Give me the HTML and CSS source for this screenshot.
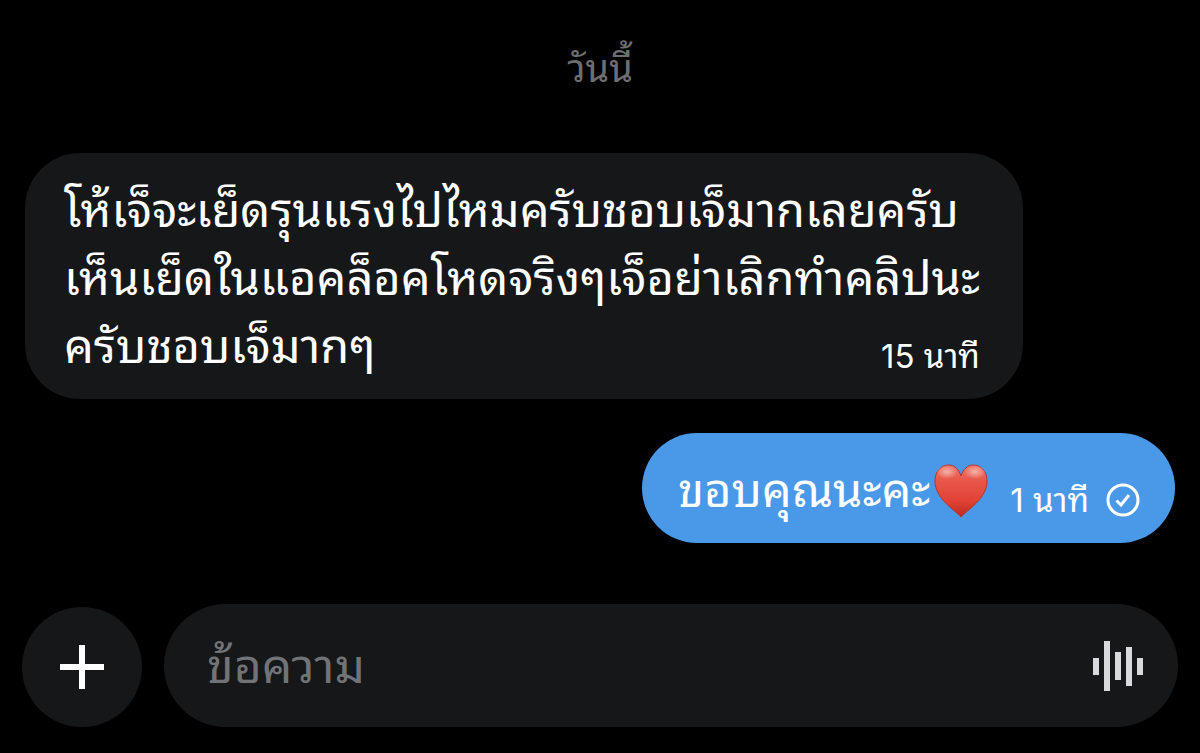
FILE: index.html
```
<!DOCTYPE html>
<html lang="th">
<head>
    <meta charset="UTF-8">
    <meta name="viewport" content="width=device-width, initial-scale=1.0">
    <title>ข้อความ</title>
    <link rel="stylesheet" href="styles.css">
</head>
<body>

    <main class="chat">
        <div class="day">วันนี้</div>

        <div class="message received">
            <p class="text">โห้เจ็จะเย็ดรุนแรงไปไหมครับชอบเจ็มากเลยครับ<br>เห็นเย็ดในแอคล็อคโหดจริงๆเจ็อย่าเลิกทำคลิปนะ<br>ครับชอบเจ็มากๆ</p>
            <time class="time">15 นาที</time>
        </div>

        <div class="message sent">
            <p class="text">ขอบคุณนะคะ</p>
            <svg class="heart" viewBox="0 0 54 54" role="img" aria-label="หัวใจ">
                <defs>
                    <linearGradient id="heartFill" x1="0" y1="0" x2="0" y2="1">
                        <stop offset="0" stop-color="#ec7363"/>
                        <stop offset="0.3" stop-color="#e85749"/>
                        <stop offset="0.7" stop-color="#e04235"/>
                        <stop offset="1" stop-color="#b92a20"/>
                    </linearGradient>
                    <radialGradient id="heartShine">
                        <stop offset="0" stop-color="#fff" stop-opacity="0.5"/>
                        <stop offset="1" stop-color="#fff" stop-opacity="0"/>
                    </radialGradient>
                </defs>
                <path d="M27 53C21 46 1 35 1 17C1 7 7 1 15 1C20 1 25 5 27 12C29 5 34 1 39 1C47 1 53 7 53 17C53 35 33 46 27 53Z" fill="url(#heartFill)" stroke="#b5352c" stroke-width="1"/>
                <ellipse cx="13" cy="8" rx="11" ry="7" fill="url(#heartShine)"/>
                <ellipse cx="41" cy="8" rx="11" ry="7" fill="url(#heartShine)"/>
            </svg>
            <time class="time">1 นาที</time>
            <svg class="check" viewBox="0 0 34 34" fill="none" stroke="#fff" role="img" aria-label="ส่งแล้ว">
                <circle cx="17" cy="17" r="15" stroke-width="3"/>
                <path d="M10.5 17.5L15 22L23 12" stroke-width="3"/>
            </svg>
        </div>
    </main>

    <form class="composer">
        <button type="button" class="add" aria-label="เพิ่ม">
            <svg viewBox="0 0 44 44" stroke="#fff" stroke-width="6">
                <path d="M22 0V44M0 22H44"/>
            </svg>
        </button>
        <div class="field">
            <input type="text" placeholder="ข้อความ" aria-label="ข้อความ">
            <button type="button" class="voice" aria-label="ข้อความเสียง">
                <svg viewBox="0 0 50 50" fill="#d9dadd">
                    <rect x="0" y="17" width="6" height="17"/>
                    <rect x="11" y="0" width="6" height="50"/>
                    <rect x="22" y="11" width="6" height="28"/>
                    <rect x="33" y="6" width="6" height="39"/>
                    <rect x="44" y="17" width="6" height="17"/>
                </svg>
            </button>
        </div>
    </form>

</body>
</html>
```

FILE: styles.css
```
* {
    box-sizing: border-box;
}

body {
    margin: 0;
    min-height: 100vh;
    background-color: #000;
    display: flex;
    flex-direction: column;
    justify-content: space-between;
    font-family: Inter, "Noto Sans Thai Looped", "Noto Sans Thai", "Loma", "Noto Sans", sans-serif;
    color: white;
}

.chat {
    display: flex;
    flex-direction: column;
    padding: 41px 25px 0;
}

.day {
    margin-bottom: 58px;
    font-size: 38px;
    line-height: 54px;
    text-align: center;
    color: #6d6e72;
}

.message {
    border-radius: 55px;
}

.text {
    margin: 0;
    font-size: 47px;
    font-weight: 450;
    line-height: 68px;
    white-space: nowrap;
}

.time {
    font-size: 33px;
    line-height: 44px;
    white-space: nowrap;
}

/* the time shares the cell with the text and sits on its last line */
.received {
    display: grid;
    align-self: flex-start;
    padding: 23px 43px 19px 39px;
    background-color: #161719;
}

.received .text,
.received .time {
    grid-area: 1 / 1;
}

.received .time {
    align-self: end;
    justify-self: end;
    margin-bottom: 2px;
}

.sent {
    display: flex;
    align-items: flex-end;
    align-self: flex-end;
    margin-top: 34px;
    padding: 23px 35px 19px 36px;
    background-color: #4a99e9;
}

.sent .time {
    margin-bottom: 2px;
}

.heart {
    width: 54px;
    height: 54px;
    margin: 0 22px 6px 4px;
}

.check {
    width: 34px;
    height: 34px;
    margin: 0 0 7px 17px;
}

.composer {
    display: flex;
    align-items: flex-end;
    gap: 22px;
    padding: 0 22px 26px;
}

button {
    padding: 0;
    border: none;
    background: none;
    cursor: pointer;
}

button svg {
    display: block;
}

.add {
    flex: none;
    display: flex;
    align-items: center;
    justify-content: center;
    width: 120px;
    height: 120px;
    border-radius: 50%;
    background-color: #161719;
}

.add svg {
    width: 44px;
    height: 44px;
}

.field {
    flex: 1;
    display: flex;
    align-items: center;
    height: 123px;
    padding: 0 35px 0 43px;
    border-radius: 62px;
    background-color: #161719;
}

.field input {
    flex: 1;
    min-width: 0;
    height: 80px;
    padding: 0;
    border: none;
    outline: none;
    background: none;
    font-family: inherit;
    font-size: 48px;
    color: white;
}

.field input::placeholder {
    color: #727377;
    opacity: 1;
}

.voice svg {
    width: 50px;
    height: 50px;
}
```
